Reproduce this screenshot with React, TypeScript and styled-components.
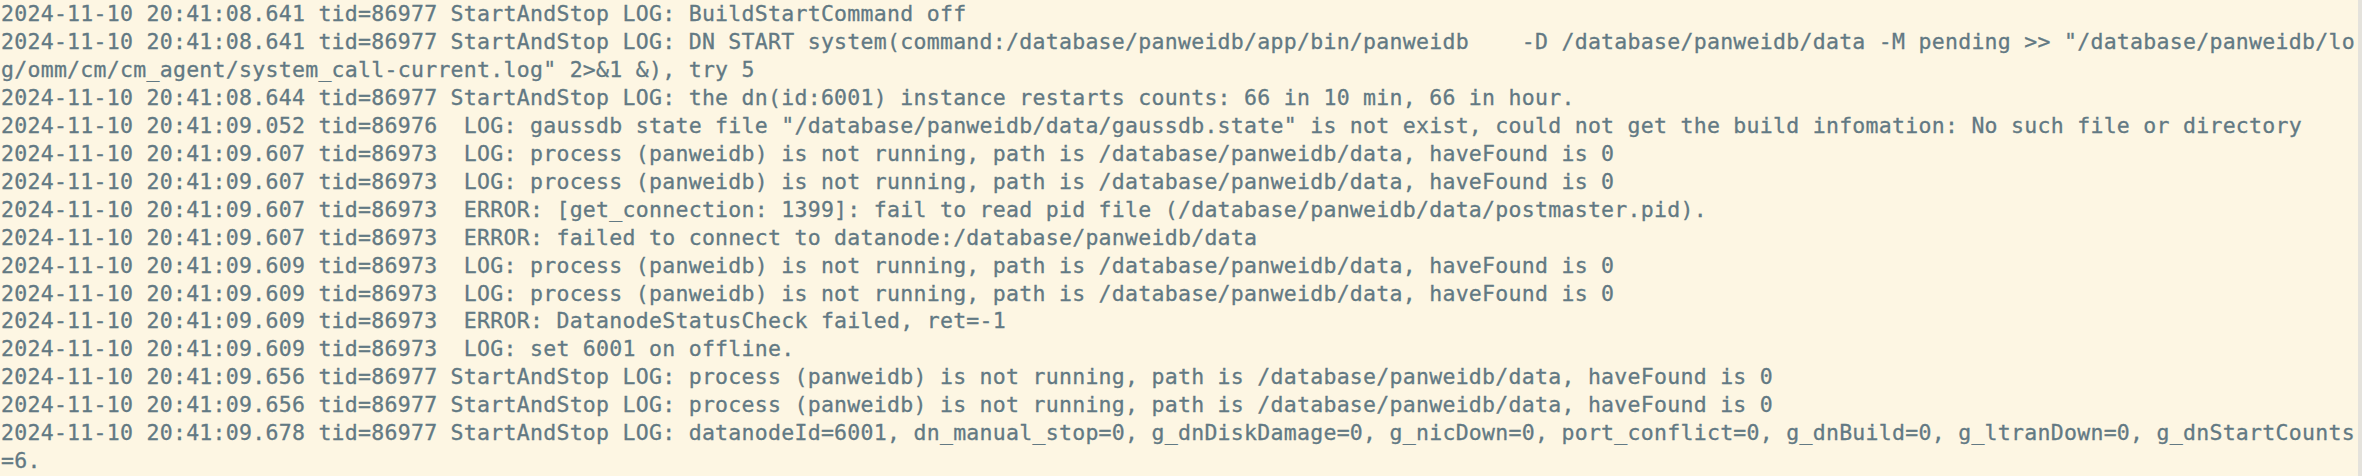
import React from "react";
import styled, { createGlobalStyle } from "styled-components";

const GlobalStyle = createGlobalStyle`
  html, body {
    margin: 0;
    padding: 0;
    background: #fdf6e3;
  }
`;

const LogBlock = styled.pre`
  box-sizing: border-box;
  margin: 0;
  width: 2362px;
  height: 476px;
  overflow: hidden;
  padding: 0 0 0 1px;
  background: #fdf6e3;
  border-right: 4px solid #e4e2dc;
  color: #627983;
  font-family: "DejaVu Sans Mono", monospace;
  font-size: 21.5px;
  letter-spacing: 0.28px;
  line-height: 27.95px;
  -webkit-text-stroke: 0.3px #627983;
  white-space: pre-wrap;
  word-break: break-all;
`;

const LogLine = styled.span`
  display: block;
`;

const lines: string[] = [
  "2024-11-10 20:41:08.641 tid=86977 StartAndStop LOG: BuildStartCommand off",
  '2024-11-10 20:41:08.641 tid=86977 StartAndStop LOG: DN START system(command:/database/panweidb/app/bin/panweidb    -D /database/panweidb/data -M pending >> "/database/panweidb/log/omm/cm/cm_agent/system_call-current.log" 2>&1 &), try 5',
  "2024-11-10 20:41:08.644 tid=86977 StartAndStop LOG: the dn(id:6001) instance restarts counts: 66 in 10 min, 66 in hour.",
  '2024-11-10 20:41:09.052 tid=86976  LOG: gaussdb state file "/database/panweidb/data/gaussdb.state" is not exist, could not get the build infomation: No such file or directory',
  "2024-11-10 20:41:09.607 tid=86973  LOG: process (panweidb) is not running, path is /database/panweidb/data, haveFound is 0",
  "2024-11-10 20:41:09.607 tid=86973  LOG: process (panweidb) is not running, path is /database/panweidb/data, haveFound is 0",
  "2024-11-10 20:41:09.607 tid=86973  ERROR: [get_connection: 1399]: fail to read pid file (/database/panweidb/data/postmaster.pid).",
  "2024-11-10 20:41:09.607 tid=86973  ERROR: failed to connect to datanode:/database/panweidb/data",
  "2024-11-10 20:41:09.609 tid=86973  LOG: process (panweidb) is not running, path is /database/panweidb/data, haveFound is 0",
  "2024-11-10 20:41:09.609 tid=86973  LOG: process (panweidb) is not running, path is /database/panweidb/data, haveFound is 0",
  "2024-11-10 20:41:09.609 tid=86973  ERROR: DatanodeStatusCheck failed, ret=-1",
  "2024-11-10 20:41:09.609 tid=86973  LOG: set 6001 on offline.",
  "2024-11-10 20:41:09.656 tid=86977 StartAndStop LOG: process (panweidb) is not running, path is /database/panweidb/data, haveFound is 0",
  "2024-11-10 20:41:09.656 tid=86977 StartAndStop LOG: process (panweidb) is not running, path is /database/panweidb/data, haveFound is 0",
  "2024-11-10 20:41:09.678 tid=86977 StartAndStop LOG: datanodeId=6001, dn_manual_stop=0, g_dnDiskDamage=0, g_nicDown=0, port_conflict=0, g_dnBuild=0, g_ltranDown=0, g_dnStartCounts=6.",
];

export default function App() {
  return (
    <>
      <GlobalStyle />
      <LogBlock>
        {lines.map((line, i) => (
          <LogLine key={i}>{line}</LogLine>
        ))}
      </LogBlock>
    </>
  );
}
